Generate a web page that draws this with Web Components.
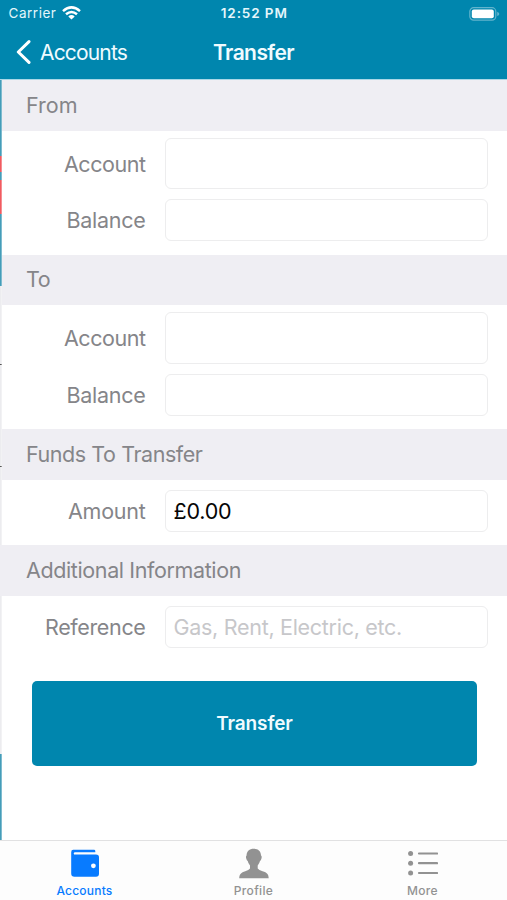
<!DOCTYPE html>
<html lang="en">
<head>
<meta charset="utf-8">
<title>Transfer</title>
<style>
html,body{margin:0;height:100%;background:#fff;font-family:Inter,"Liberation Sans",sans-serif;overflow:hidden}
</style>
</head>
<body>
<transfer-app></transfer-app>
<script>
const define = (name, html, setup) => {
  const t = document.createElement('template');
  t.innerHTML = html;
  customElements.define(name, class extends HTMLElement {
    constructor() {
      super();
      this.attachShadow({mode: 'open'}).append(t.content.cloneNode(true));
    }
    connectedCallback() { if (setup) setup(this, this.shadowRoot); }
  });
};

/* One line of text whose tracking is set so that it spans the given width. */
define('tracked-text', `<style>
:host{display:inline-block;white-space:pre;line-height:1}
span{display:inline-block}
</style><span><slot></slot></span>`, (el, root) => {
  const s = root.querySelector('span');
  const n = el.textContent.length;
  const gap = (Number(el.getAttribute('span')) - s.getBoundingClientRect().width) / n;
  s.style.letterSpacing = gap + 'px';
});

define('status-bar', `<style>
:host{display:grid;grid-template-columns:1fr auto 1fr;align-items:center;height:27px;color:#e4f6fb;font-size:13.5px;padding:0 7px 0 8.5px}
.l{display:flex;align-items:center;gap:5px}
tracked-text{padding-top:1px}
.c{font-weight:600}
.r{justify-self:end}
svg{display:block}
</style>
<div class="l"><tracked-text span="48">Carrier</tracked-text>
<svg width="19" height="14" viewBox="0 0 19 14" style="margin-top:-1px"><g fill="none" stroke="#fff" stroke-width="2.5"><path d="M1 5.1Q9.5-2.3 18 5.1"/><path d="M4 8.3Q9.5 3.6 15 8.3"/></g><path fill="#fff" d="M6.3 10.4Q9.5 7.8 12.7 10.4L9.5 13.6Z"/></svg></div>
<tracked-text class="c" span="67">12:52 PM</tracked-text>
<svg class="r" width="31" height="14" viewBox="0 0 31 14"><rect x=".8" y=".7" width="26" height="12.4" rx="3.8" fill="none" stroke="#62b4cd" stroke-width="1.2"/><rect x="2.8" y="2.6" width="22" height="8.6" rx="2" fill="#fff"/><path d="M28.2 4.7Q30.3 5.4 30.3 6.9T28.2 9.1Z" fill="#62b4cd"/></svg>`);

define('nav-bar', `<style>
:host{display:grid;grid-template-columns:1fr auto 1fr;align-items:center;height:50px;color:#f0fbff;font-size:21px;padding:0 16px}
.back{display:flex;align-items:center;gap:9px}
.t{font-weight:600}
</style>
<div class="back"><svg width="15" height="24" viewBox="0 0 15 24"><path d="M13 1.6 2.3 12 13 22.4" fill="none" stroke="#fff" stroke-width="3" stroke-linecap="round" stroke-linejoin="round"/></svg><tracked-text span="87">Accounts</tracked-text></div>
<tracked-text class="t" span="81">Transfer</tracked-text>`);

define('form-section', `<style>
:host{display:block}
header{box-sizing:border-box;height:50.5px;background:#efeef3;color:#858589;font-size:21.5px;display:flex;align-items:center;padding:0 0 0 24px}
.rows{display:flex;flex-direction:column;gap:10px;padding:7px 19px 13.5px 0}
:host([single]) .rows{padding-top:10.5px;padding-bottom:13px}
:host([wide]) header{margin-left:-2px;padding-left:26px}
</style><header><slot name="title"></slot></header><div class="rows"><slot></slot></div>`);

define('form-row', `<style>
:host{display:grid;grid-template-columns:143.5px 1fr;column-gap:19px;align-items:center;height:42px;color:#858589;font-size:21.5px}
:host([tall]){height:51.5px}
.label{justify-self:end;line-height:1;display:flex;padding-top:2px}
.box{box-sizing:border-box;height:100%;border:1px solid #ededee;border-radius:6px;padding:1px 0 0 8px;display:flex;align-items:center;color:#050505}
::slotted([hint]){color:#c7c7ca}
</style><div class="label"><slot name="label"></slot></div><div class="box"><slot></slot></div>`);

define('primary-button', `<style>
:host{box-sizing:border-box;display:flex;align-items:center;justify-content:center;background:#0086ae;border-radius:5px;color:#f0fbff;font-size:19px;font-weight:600;padding-top:1px}
</style><slot></slot>`);

define('tab-item', `<style>
:host{display:flex;flex-direction:column;align-items:center;color:#929292;font-size:12px;font-weight:500}
:host([active]){color:#087bff}
.icon{height:44px;display:flex;align-items:flex-start}
</style><div class="icon"><slot name="icon"></slot></div><slot></slot>`);

define('tab-bar', `<style>
:host{box-sizing:border-box;display:grid;grid-template-columns:repeat(3,1fr);height:60px;background:#fdfdfd;border-top:1.5px solid #e1e1e2}
svg{display:block}
</style>
<tab-item active><svg slot="icon" width="30" height="38" viewBox="0 0 30 38"><path fill="#087bff" fill-rule="evenodd" d="M3.2 8.8H24Q25.3 8.8 25.3 10V11.2H5.2Q3.7 11.2 3.7 12.4T5.2 13.6H26Q29 13.6 29 16.4V32.8Q29 35.8 26 35.8H4.5Q1.2 35.8 1.2 32.5V11.2Q1.2 8.8 3.2 8.8ZM23.4 22.4A2.4 2.4 0 1 0 23.4 27.2A2.4 2.4 0 1 0 23.4 22.4Z"/></svg><tracked-text span="56">Accounts</tracked-text></tab-item>
<tab-item><svg slot="icon" width="30" height="38" viewBox="0 0 30 38"><path fill="#929292" d="M14.8 7.7C19.2 7.7 22 10.3 22 14.5Q23.2 15.3 22.3 18Q22 19.5 21 20Q20.4 22.5 18.7 24.4V27.6Q19.8 29.2 23.6 30.2C28 31.5 29.5 33 29.7 37.3H.2C.5 33 2 31.5 6.3 30.2Q9.8 29.2 11 27.6V24.4Q9.2 22.5 8.7 20Q7.7 19.5 7.4 18Q6.5 15.3 7.6 14.5C7.6 10.3 10.4 7.7 14.8 7.7Z"/></svg><tracked-text span="39.5">Profile</tracked-text></tab-item>
<tab-item><svg slot="icon" width="30" height="38" viewBox="0 0 30 38"><g fill="#929292"><circle cx="2.6" cy="12.5" r="2.5"/><circle cx="2.6" cy="22.2" r="2.5"/><circle cx="2.6" cy="32" r="2.5"/></g><path d="M11 12.5H29.1M11 22.2H29.1M11 32H29.1" stroke="#929292" stroke-width="2.2" stroke-linecap="round"/></svg><tracked-text span="31">More</tracked-text></tab-item>`);

define('transfer-app', `<style>
:host{display:flex;flex-direction:column;height:900px;width:507px}
.top{background:#0086ae;height:79px}
main{box-sizing:border-box;flex:1;min-height:0;border-top:1px solid #a9d8e7;padding-left:2px;
background:linear-gradient(#449db9 0 76px,#f15b60 76px 92px,#449db9 92px 100px,#f15b60 100px 134px,#449db9 134px 206.5px,#ececef 206.5px 284px,#555 284px 285.3px,#ececef 285.3px 386px,#555 386px 387.3px,#ececef 387.3px 674px,#449db9 674px) 0 0/1.7px 100% no-repeat #fff}
primary-button{height:85.5px;margin:19.5px 30px 0 30px}
</style>
<div class="top"><status-bar></status-bar><nav-bar></nav-bar></div>
<main>
<form-section><tracked-text slot="title" span="51.5">From</tracked-text>
<form-row tall><tracked-text slot="label" span="81.5">Account</tracked-text></form-row>
<form-row><tracked-text slot="label" span="79">Balance</tracked-text></form-row></form-section>
<form-section><tracked-text slot="title" span="24">To</tracked-text>
<form-row tall><tracked-text slot="label" span="81.5">Account</tracked-text></form-row>
<form-row><tracked-text slot="label" span="79">Balance</tracked-text></form-row></form-section>
<form-section single><tracked-text slot="title" span="176.5">Funds To Transfer</tracked-text>
<form-row><tracked-text slot="label" span="77.5">Amount</tracked-text><tracked-text span="58">£0.00</tracked-text></form-row></form-section>
<form-section single wide><tracked-text slot="title" span="215">Additional Information</tracked-text>
<form-row><tracked-text slot="label" span="100.5">Reference</tracked-text><tracked-text hint span="228.5">Gas, Rent, Electric, etc.</tracked-text></form-row></form-section>
<primary-button><tracked-text span="76.5">Transfer</tracked-text></primary-button>
</main>
<tab-bar></tab-bar>`);
</script>
</body>
</html>
